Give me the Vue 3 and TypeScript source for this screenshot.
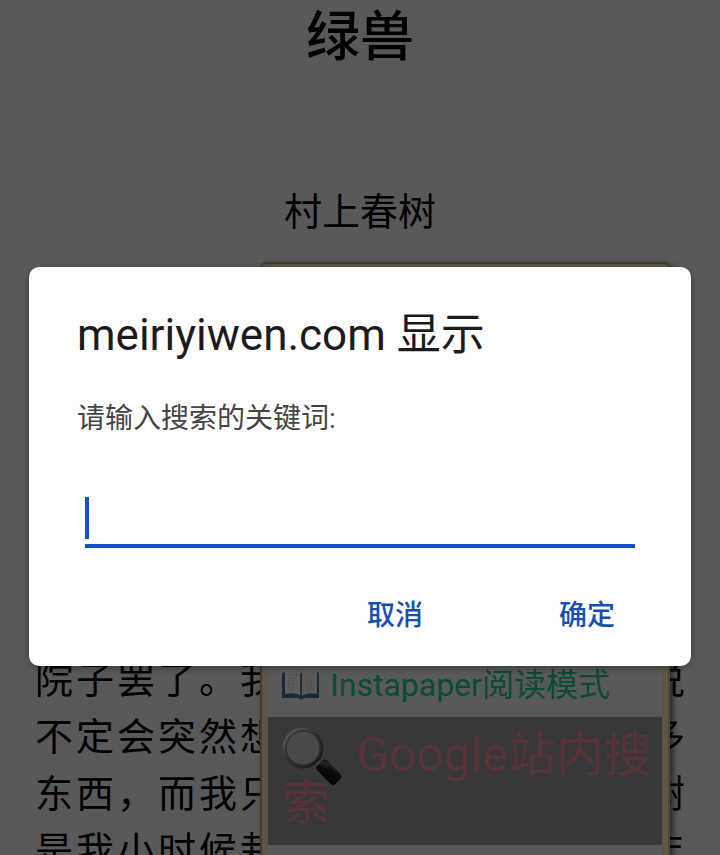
<script setup lang="ts">
import { ref } from 'vue'

interface Line {
  start: string
  end: string
}

const lines: Line[] = [
  { start: '院子罢了。我', end: '说' },
  { start: '不定会突然想', end: '多' },
  { start: '东西，而我只', end: '树' },
  { start: '是我小时候栽', end: '年' },
]

const keyword = ref('')
</script>

<template>
  <div class="page">
    <article class="article">
      <h1 class="title">绿兽</h1>
      <p class="author">村上春树</p>
      <div class="body">
        <p v-for="line in lines" :key="line.start" class="line">
          <span>{{ line.start }}</span>
          <span>{{ line.end }}</span>
        </p>
      </div>
    </article>

    <nav class="menu">
      <a class="item reader" href="#reader">
        <svg class="book" viewBox="0 0 38 30" aria-hidden="true">
          <path d="M0 3 L3 2 V24 H35 V2 L37 3 V28 H22 Q19 31 16 28 H0Z" fill="#1b2931" />
          <path d="M3 1 Q13 -1 18.500 3 V26 Q12 23 3 25Z" fill="#5c5c5c" />
          <path d="M35 1 Q25 -1 19.500 3 V26 Q26 23 35 25Z" fill="#5a5a5a" />
          <path d="M18 2 L19 4 L20 2 V26 L19 28 L18 26Z" fill="#2c2d2e" />
          <path d="M6 5H15M6 8H14M6 11H15M6 14H13M6 17H15M6 20H14M23 5H32M24 8H32M23 11H31M24 14H32M23 17H32M24 20H31" stroke="#4e4e4e" stroke-width="1" stroke-dasharray="3 1" />
          <path d="M3 25 Q13 23 19 27 Q26 23 35 25" fill="none" stroke="#1b2931" stroke-width="2" />
        </svg>
        <span>Instapaper阅读模式</span>
      </a>
      <a class="item search" href="#search">
        <svg class="lens" viewBox="0 0 60 60" aria-hidden="true">
          <defs>
            <linearGradient id="rim" x1="0" y1="0" x2="1" y2="1">
              <stop offset="0" stop-color="#5c5c5c" />
              <stop offset="0.5" stop-color="#2c2e2e" />
              <stop offset="1" stop-color="#151515" />
            </linearGradient>
            <linearGradient id="grip" x1="0" y1="1" x2="1" y2="0">
              <stop offset="0" stop-color="#050505" />
              <stop offset="0.6" stop-color="#0c0c0c" />
              <stop offset="0.8" stop-color="#262626" />
              <stop offset="1" stop-color="#080808" />
            </linearGradient>
          </defs>
          <path d="M34 34 L40 40" stroke="#4a4a4a" stroke-width="4" />
          <circle cx="21" cy="21" r="19" fill="#484949" stroke="url(#rim)" stroke-width="3" />
          <circle cx="21" cy="21" r="17" fill="none" stroke="#222728" stroke-width="1" />
          <rect x="-5" y="-1" width="14" height="26" rx="4" fill="url(#grip)" transform="translate(37 38) rotate(-44)" />
        </svg>
        Google站内搜索
      </a>
    </nav>

    <div class="scrim">
      <form class="dialog" role="dialog" aria-labelledby="dialog-title" @submit.prevent>
        <h2 id="dialog-title" class="heading">meiriyiwen.com 显示</h2>
        <label class="label" for="keyword">请输入搜索的关键词:</label>
        <div class="field">
          <input id="keyword" v-model="keyword" class="input" type="text" autocomplete="off" />
          <span class="caret" aria-hidden="true"></span>
        </div>
        <div class="actions">
          <button class="button" type="button">取消</button>
          <button class="button" type="submit">确定</button>
        </div>
      </form>
    </div>
  </div>
</template>

<style>
body {
  margin: 0;
  background: #595959;
}
</style>

<style scoped>
.page {
  position: relative;
  height: 100vh;
  overflow: hidden;
  background: #595959;
  color: #000;
  font-family: Roboto, "Noto Sans CJK SC", sans-serif;
}

.title,
.author,
.line,
.heading {
  margin: 0;
}

.title {
  padding-top: 6px;
  font-size: 54px;
  line-height: 64px;
  font-weight: 500;
  text-align: center;
}

.author {
  margin-top: 114px;
  font-size: 38px;
  line-height: 56px;
  text-align: center;
}

.body {
  margin-top: 412px;
  padding: 0 32px 0 35px;
}

.line {
  display: flex;
  justify-content: space-between;
  font-size: 38px;
  line-height: 57px;
  letter-spacing: 3px;
  white-space: nowrap;
}

.menu {
  position: absolute;
  top: 262px;
  left: 260px;
  right: 50px;
  bottom: -20px;
  box-sizing: border-box;
  padding-top: 387px;
  border: 2px solid #403e38;
  border-right-color: #4c483b;
  border-radius: 6px;
  background: #595959;
  box-shadow: inset 0 0 0 6px #5c5645, 3px 3px 6px rgba(0, 0, 0, 0.6);
}

.item {
  display: block;
  margin: 0 6px;
  text-decoration: none;
}

.reader {
  display: flex;
  align-items: center;
  gap: 10px;
  padding: 12px 14px 10px;
  color: #0b4a35;
  font-size: 32px;
  line-height: 44px;
  white-space: nowrap;
}

.book {
  width: 38px;
  height: 30px;
}

.search {
  padding: 14px 4px 18px 14px;
  background: #383838;
  color: #573437;
  font-size: 48px;
  line-height: 48px;
}

.lens {
  width: 60px;
  height: 60px;
  margin: -12px 2px -12px 0;
  vertical-align: -4px;
}

.scrim {
  position: absolute;
  inset: 0;
  padding: 267px 29px 0;
}

.dialog {
  box-sizing: border-box;
  padding: 36px 48px 20px;
  border-radius: 10px;
  background: #fff;
  box-shadow: 0 2px 6px rgba(0, 0, 0, 0.35);
}

.heading {
  color: #1b1b1b;
  font-size: 44px;
  line-height: 64px;
  font-weight: 400;
}

.label {
  display: block;
  margin-top: 32px;
  color: #444;
  font-size: 28px;
  line-height: 40px;
}

.field {
  position: relative;
  margin: 50px 8px 0;
}

.input {
  display: block;
  box-sizing: border-box;
  width: 100%;
  height: 59px;
  padding: 0 8px;
  border: 0;
  border-bottom: 4px solid #1751bd;
  border-radius: 0;
  outline: 0;
  background: transparent;
  color: #1b1b1b;
  font: inherit;
  font-size: 36px;
}

.caret {
  position: absolute;
  left: 0;
  bottom: 9px;
  width: 4px;
  height: 42px;
  background: #1751bd;
}

.actions {
  display: flex;
  justify-content: flex-end;
  gap: 96px;
  padding: 38px 8px 0;
}

.button {
  padding: 0 20px;
  border: 0;
  background: transparent;
  color: #174fb0;
  font: inherit;
  font-size: 28px;
  line-height: 60px;
  font-weight: 500;
}
</style>
